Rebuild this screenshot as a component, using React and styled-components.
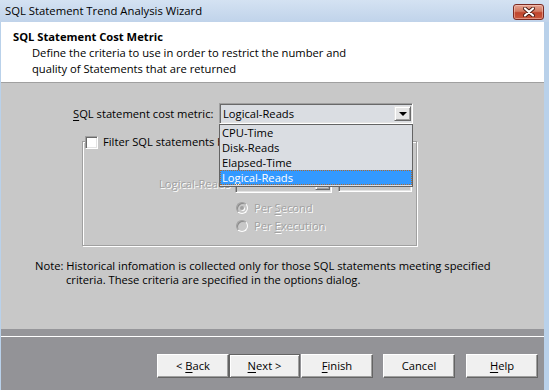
import React from 'react';
import styled, { createGlobalStyle } from 'styled-components';

const GlobalStyle = createGlobalStyle`
  html, body { margin: 0; padding: 0; background: #ffffff; }
  body {
    font-family: "Open Sans", "Noto Sans", sans-serif;
    font-size: 11.2px;
    line-height: 16px;
    color: #000;
  }
  * { box-sizing: border-box; }
  u { text-decoration-thickness: 1px; text-underline-offset: 2px; }
`;

const Window = styled.div`
  width: 549px;
  height: 390px;
  display: flex;
  flex-direction: column;
  overflow: hidden;
  background: #b9d1ea;
`;

const TitleBar = styled.div`
  height: 22px;
  flex: none;
  display: flex;
  align-items: center;
  justify-content: space-between;
  padding: 0 5px 0 5px;
  background: linear-gradient(#d4e2f2, #c0d3ea);
  font-size: 11.3px;
`;

const CloseButton = styled.div`
  width: 31px;
  height: 16px;
  margin-top: 1px;
  border: 1px solid #7a2a22;
  border-radius: 3px;
  background: linear-gradient(#e6a493 0%, #d27a62 45%, #c0452d 55%, #c9583d 100%);
  display: flex;
  align-items: center;
  justify-content: center;
  box-shadow: inset 0 0 0 1px rgba(255, 220, 210, 0.45);
`;

const Frame = styled.div`
  flex: 1;
  display: flex;
  flex-direction: column;
  margin-left: 1px;
  margin-right: 5px;
  background: #c8c8c8;
`;

const Header = styled.div`
  height: 61px;
  flex: none;
  background: #fff;
  border-bottom: 1px solid #a0a0a0;
  padding: 7px 0 0 12px;
`;

const HeaderTitle = styled.div`
  font-weight: 700;
`;

const HeaderDesc = styled.div`
  padding-left: 19px;
`;

const Content = styled.div`
  position: relative;
  height: 246px;
  flex: none;
  background: #c8c8c8;
  display: flex;
  flex-direction: column;
`;

const ComboRow = styled.div`
  margin: 20px 0 0 72px;
  width: 340px;
  height: 21px;
  display: flex;
  align-items: center;
  justify-content: space-between;
`;

const Combo = styled.div`
  position: relative;
  width: ${p => p.$w}px;
  height: ${p => p.$h}px;
  border-top: 1px solid #a0a0a0;
  border-left: 1px solid #a0a0a0;
  border-right: 1px solid #ffffff;
  border-bottom: 1px solid #ffffff;
  box-shadow: inset 1px 1px 0 #696969, inset -1px -1px 0 #e3e3e3;
  background: ${p => (p.$disabled ? '#c8c8c8' : '#dadde2')};
  display: flex;
  align-items: center;
  padding-left: 3px;
`;

const DropButton = styled.div`
  position: absolute;
  right: ${p => p.$r}px;
  top: 2px;
  bottom: 2px;
  width: ${p => p.$w}px;
  background: ${p => (p.$disabled ? '#c8c8c8' : '#e6e6e6')};
  border-top: 1px solid #e3e3e3;
  border-left: 1px solid #e3e3e3;
  border-right: 1px solid #696969;
  border-bottom: 1px solid #696969;
  box-shadow: inset 1px 1px 0 #ffffff, inset -1px -1px 0 #a0a0a0;
  display: flex;
  align-items: center;
  justify-content: center;
`;

const Arrow = styled.div`
  width: 0;
  height: 0;
  border-left: 4px solid transparent;
  border-right: 4px solid transparent;
  border-top: 4px solid #000;
  margin-top: 1px;
`;

const DropList = styled.div`
  position: absolute;
  left: 218px;
  top: 41px;
  width: 194px;
  height: 63px;
  border: 1px solid #646464;
  background: #dadde2;
  z-index: 5;
  display: flex;
  flex-direction: column;
`;

const ListItem = styled.div`
  height: 15px;
  line-height: 15px;
  padding-left: 2px;
  color: ${p => (p.$selected ? '#fff' : '#000')};
  background: ${p => (p.$selected ? '#3399ff' : 'transparent')};
  outline: ${p => (p.$selected ? '1px dotted #b06a2c' : 'none')};
  outline-offset: -1px;
`;

const Group = styled.div`
  position: relative;
  margin: 17px 0 0 81px;
  width: 335px;
  height: 105px;
  border: 1px solid #a0a0a0;
  box-shadow: inset 1px 1px 0 #fff, 1px 1px 0 #fff;
  padding: 29px 0 0 0;
`;

const Legend = styled.label`
  position: absolute;
  left: 2px;
  top: -8px;
  display: flex;
  align-items: center;
  gap: 5px;
  padding-right: 2px;
  background: #c8c8c8;
  height: 16px;
  white-space: nowrap;
`;

const CheckBox = styled.div`
  width: 13px;
  height: 13px;
  flex: none;
  background: #fff;
  border-top: 1px solid #a0a0a0;
  border-left: 1px solid #a0a0a0;
  border-right: 1px solid #fff;
  border-bottom: 1px solid #fff;
  box-shadow: inset 1px 1px 0 #696969, inset -1px -1px 0 #e3e3e3;
`;

const DisabledText = styled.span`
  color: #a2a2a2;
  text-shadow: 1px 1px 0 #ffffff;
  white-space: nowrap;
`;

const InputRow = styled.div`
  display: flex;
  align-items: flex-start;
  margin-left: 76px;
  height: 22px;
`;

const InputLabel = styled(DisabledText)`
  width: 76px;
  margin-top: 5px;
`;

const TextField = styled.div`
  margin-left: 6px;
  width: 74px;
  height: 21px;
  border-top: 1px solid #a0a0a0;
  border-left: 1px solid #a0a0a0;
  border-right: 1px solid #ffffff;
  border-bottom: 1px solid #ffffff;
  box-shadow: inset 1px 1px 0 #696969, inset -1px -1px 0 #e3e3e3;
`;

const RadioRow = styled.div`
  display: flex;
  align-items: center;
  gap: 6px;
  margin: ${p => p.$mt}px 0 0 153px;
  height: 14px;
`;

const Radio = styled.div`
  width: 12px;
  height: 12px;
  flex: none;
  border-radius: 50%;
  background: #c8c8c8;
  border: 1px solid #a0a0a0;
  border-right-color: #ffffff;
  border-bottom-color: #ffffff;
  box-shadow: inset 1px 1px 0 #8a8a8a;
  display: flex;
  align-items: center;
  justify-content: center;
  &::after {
    content: '';
    display: ${p => (p.$checked ? 'block' : 'none')};
    width: 4px;
    height: 4px;
    border-radius: 50%;
    background: #a0a0a0;
    box-shadow: 1px 1px 0 #fff;
  }
`;

const Note = styled.div`
  margin: 13px 0 0 34px;
  padding-left: 31px;
  text-indent: -31px;
  line-height: 14px;
`;

const Separator = styled.div`
  flex: none;
  height: 8px;
  background: #96969a;
  border-bottom: 1px solid #ffffff;
`;

const Footer = styled.div`
  flex: 1;
  background: #939397;
  display: flex;
  align-items: flex-start;
  padding: 17px 0 0 156px;
`;

const Button = styled.div`
  width: ${p => p.$w || 72}px;
  height: 24px;
  margin-left: ${p => p.$ml || 0}px;
  background: #f0f0f0;
  border-top: 1px solid ${p => (p.$default ? '#646464' : '#ffffff')};
  border-left: 1px solid ${p => (p.$default ? '#646464' : '#ffffff')};
  border-right: 1px solid #646464;
  border-bottom: 1px solid #646464;
  box-shadow: ${p =>
    p.$default
      ? 'inset 1px 1px 0 #ffffff, inset -1px -1px 0 #a0a0a0'
      : 'inset -1px -1px 0 #a0a0a0'};
  display: flex;
  align-items: center;
  justify-content: center;
  padding-bottom: 1px;
`;

const ButtonLabel = styled.span`
  white-space: pre;
`;

export default function App() {
  return (
    <>
      <GlobalStyle />
      <Window>
        <TitleBar>
          <span>SQL Statement Trend Analysis Wizard</span>
          <CloseButton>
            <svg width="12" height="10" viewBox="0 0 12 10">
              <path d="M2 1.5 L10 8.5 M10 1.5 L2 8.5" stroke="#4a1a12" strokeWidth="4" strokeLinecap="round" />
              <path d="M2 1.5 L10 8.5 M10 1.5 L2 8.5" stroke="#ffffff" strokeWidth="2.2" strokeLinecap="round" />
            </svg>
          </CloseButton>
        </TitleBar>
        <Frame>
          <Header>
            <HeaderTitle>SQL Statement Cost Metric</HeaderTitle>
            <HeaderDesc>
              Define the criteria to use in order to restrict the number and
              <br />
              quality of Statements that are returned
            </HeaderDesc>
          </Header>
          <Content>
            <ComboRow>
              <span>
                <u>S</u>QL statement cost metric:
              </span>
              <Combo $w={194} $h={21}>
                Logical-Reads
                <DropButton $r={1} $w={17}>
                  <Arrow />
                </DropButton>
              </Combo>
            </ComboRow>
            <DropList>
              <ListItem>CPU-Time</ListItem>
              <ListItem>Disk-Reads</ListItem>
              <ListItem>Elapsed-Time</ListItem>
              <ListItem $selected>Logical-Reads</ListItem>
            </DropList>
            <Group>
              <Legend>
                <CheckBox />
                <span>Filter SQL statements by</span>
              </Legend>
              <InputRow>
                <InputLabel>Logical-Reads</InputLabel>
                <Combo $w={97} $h={22} $disabled>
                  <DropButton $r={1} $w={15} $disabled />
                </Combo>
                <TextField />
              </InputRow>
              <RadioRow $mt={8}>
                <Radio $checked />
                <DisabledText>
                  Per <u>S</u>econd
                </DisabledText>
              </RadioRow>
              <RadioRow $mt={4}>
                <Radio />
                <DisabledText>
                  Per <u>E</u>xecution
                </DisabledText>
              </RadioRow>
            </Group>
            <Note>
              Note: Historical infomation is collected only for those SQL statements meeting specified
              <br />
              criteria. These criteria are specified in the options dialog.
            </Note>
          </Content>
          <Separator />
          <Footer>
            <Button>
              <ButtonLabel>
                {'< '}
                <u>B</u>ack
              </ButtonLabel>
            </Button>
            <Button $w={71} $default>
              <ButtonLabel>
                <u>N</u>
                {'ext >'}
              </ButtonLabel>
            </Button>
            <Button $ml={1}>
              <ButtonLabel>
                <u>F</u>inish
              </ButtonLabel>
            </Button>
            <Button $ml={10}>
              <ButtonLabel>Cancel</ButtonLabel>
            </Button>
            <Button $ml={11}>
              <ButtonLabel>
                <u>H</u>elp
              </ButtonLabel>
            </Button>
          </Footer>
        </Frame>
      </Window>
    </>
  );
}
